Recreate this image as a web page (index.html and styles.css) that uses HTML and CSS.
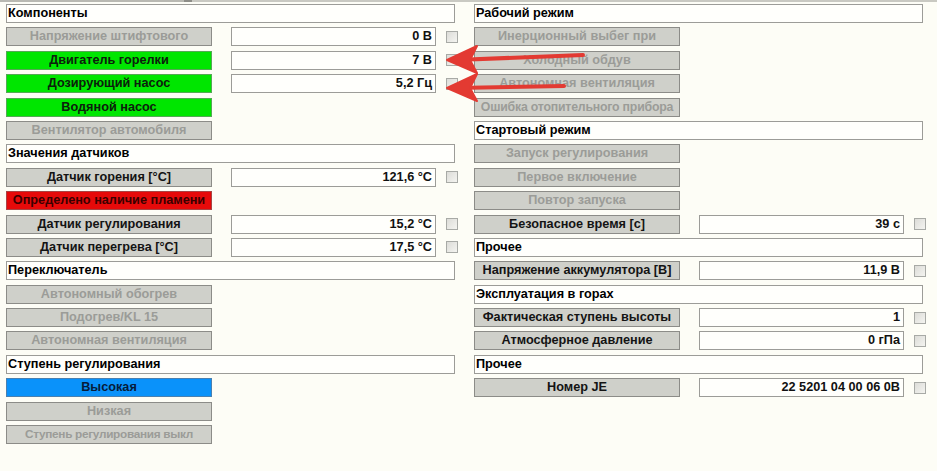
FILE: index.html
```html
<!DOCTYPE html>
<html lang="ru">
<head>
<meta charset="utf-8">
<title>Диагностика</title>
<link rel="stylesheet" href="styles.css">
</head>
<body>
<div class="tabline"><span class="tabline-a"></span><span class="tabline-b"></span><span class="tabline-c"></span></div>
<div class="page">
  <div class="col">
    <div class="hdr">Компоненты</div>
    <div class="row"><div class="btn off">Напряжение штифтового</div><div class="val">0 В</div><div class="chk"></div></div>
    <div class="row"><div class="btn green">Двигатель горелки</div><div class="val">7 В</div><div class="chk"></div></div>
    <div class="row"><div class="btn green">Дозирующий насос</div><div class="val">5,2 Гц</div><div class="chk"></div></div>
    <div class="row"><div class="btn green">Водяной насос</div></div>
    <div class="row"><div class="btn off">Вентилятор автомобиля</div></div>
    <div class="hdr">Значения датчиков</div>
    <div class="row"><div class="btn">Датчик горения [°C]</div><div class="val">121,6 °C</div><div class="chk"></div></div>
    <div class="row"><div class="btn red">Определено наличие пламени</div></div>
    <div class="row"><div class="btn">Датчик регулирования</div><div class="val">15,2 °C</div><div class="chk"></div></div>
    <div class="row"><div class="btn">Датчик перегрева [°C]</div><div class="val">17,5 °C</div><div class="chk"></div></div>
    <div class="hdr">Переключатель</div>
    <div class="row"><div class="btn off">Автономный обогрев</div></div>
    <div class="row"><div class="btn off">Подогрев/KL 15</div></div>
    <div class="row"><div class="btn off">Автономная вентиляция</div></div>
    <div class="hdr">Ступень регулирования</div>
    <div class="row"><div class="btn blue">Высокая</div></div>
    <div class="row"><div class="btn off">Низкая</div></div>
    <div class="row"><div class="btn off narrower">Ступень регулирования выкл</div></div>
  </div>
  <div class="col">
    <div class="hdr">Рабочий режим</div>
    <div class="row"><div class="btn off">Инерционный выбег при</div></div>
    <div class="row"><div class="btn off">Холодный обдув</div></div>
    <div class="row"><div class="btn off">Автономная вентиляция</div></div>
    <div class="row"><div class="btn off narrow">Ошибка отопительного прибора</div></div>
    <div class="hdr">Стартовый режим</div>
    <div class="row"><div class="btn off">Запуск регулирования</div></div>
    <div class="row"><div class="btn off">Первое включение</div></div>
    <div class="row"><div class="btn off">Повтор запуска</div></div>
    <div class="row"><div class="btn">Безопасное время [с]</div><div class="val">39 с</div><div class="chk"></div></div>
    <div class="hdr">Прочее</div>
    <div class="row"><div class="btn">Напряжение аккумулятора [В]</div><div class="val">11,9 В</div><div class="chk"></div></div>
    <div class="hdr">Эксплуатация в горах</div>
    <div class="row"><div class="btn">Фактическая ступень высоты</div><div class="val">1</div><div class="chk"></div></div>
    <div class="row"><div class="btn">Атмосферное давление</div><div class="val">0 гПа</div><div class="chk"></div></div>
    <div class="hdr">Прочее</div>
    <div class="row"><div class="btn">Номер JE</div><div class="val">22 5201 04 00 06 0B</div><div class="chk"></div></div>
  </div>
</div>
<svg class="arrows" width="937" height="471" viewBox="0 0 937 471">
  <g fill="#e33a32" stroke="#e33a32" stroke-linecap="round" stroke-linejoin="round">
    <line x1="583" y1="55" x2="456" y2="60" stroke-width="4"/>
    <polygon points="447,60 477,46 470,60 477,73" stroke-width="2"/>
    <line x1="564" y1="86" x2="456" y2="88" stroke-width="4"/>
    <polygon points="447,88 477,74 470,88 477,101" stroke-width="2"/>
  </g>
</svg>
</body>
</html>
```
FILE: styles.css
```css
html, body {
  margin: 0;
  padding: 0;
}
body {
  width: 937px;
  height: 471px;
  background: #fdfdf6;
  font-family: "Liberation Sans", Arial, sans-serif;
  font-weight: bold;
  font-size: 12.7px;
  color: #111;
  position: relative;
  overflow: hidden;
}
.tabline {
  display: flex;
  height: 2px;
}
.tabline-a {
  width: 184px;
  background: #b9b9b2;
}
.tabline-b {
  width: 8px;
  background: #8e8e88;
}
.tabline-c {
  flex: 1;
  background: #c9c9c2;
}
.page {
  display: flex;
  gap: 16px;
  padding: 2px 0 0 6px;
}
.col {
  width: 452px;
  display: grid;
  grid-auto-rows: 19px;
  row-gap: 4.4px;
}
.hdr {
  width: 449px;
  box-sizing: border-box;
  border: 1px solid #9c9c98;
  background: #fffffc;
  line-height: 17px;
  padding-left: 1px;
  color: #000;
}
.row {
  display: flex;
  align-items: center;
}
.btn {
  width: 206px;
  height: 19px;
  box-sizing: border-box;
  border: 1px solid #8c8c88;
  background: #cfd0ca;
  text-align: center;
  line-height: 17px;
  white-space: nowrap;
  overflow: hidden;
  color: #141414;
}
.btn.narrow {
  font-size: 12.3px;
  letter-spacing: -0.2px;
}
.btn.narrower {
  font-size: 11.8px;
  letter-spacing: -0.3px;
}
.btn.off {
  color: #9b9c98;
}
.btn.green {
  background: #00e600;
  border-color: #55a855;
  color: #0c200c;
}
.btn.red {
  background: #e60a0a;
  border-color: #a84444;
  color: #3a0000;
}
.btn.blue {
  background: #0a92fa;
  border-color: #4a80b0;
  color: #061c3a;
}
.val {
  width: 205px;
  height: 19px;
  box-sizing: border-box;
  margin-left: 19px;
  border: 1px solid #9c9c98;
  background: #fffffc;
  text-align: right;
  line-height: 17px;
  padding-right: 3px;
  color: #111;
}
.chk {
  width: 12px;
  height: 12px;
  box-sizing: border-box;
  margin-left: 10px;
  border: 1px solid #a8aaa6;
  background: linear-gradient(135deg, #dcdcd8, #f4f4f0);
}
.arrows {
  position: absolute;
  left: 0;
  top: 0;
  pointer-events: none;
}
```
